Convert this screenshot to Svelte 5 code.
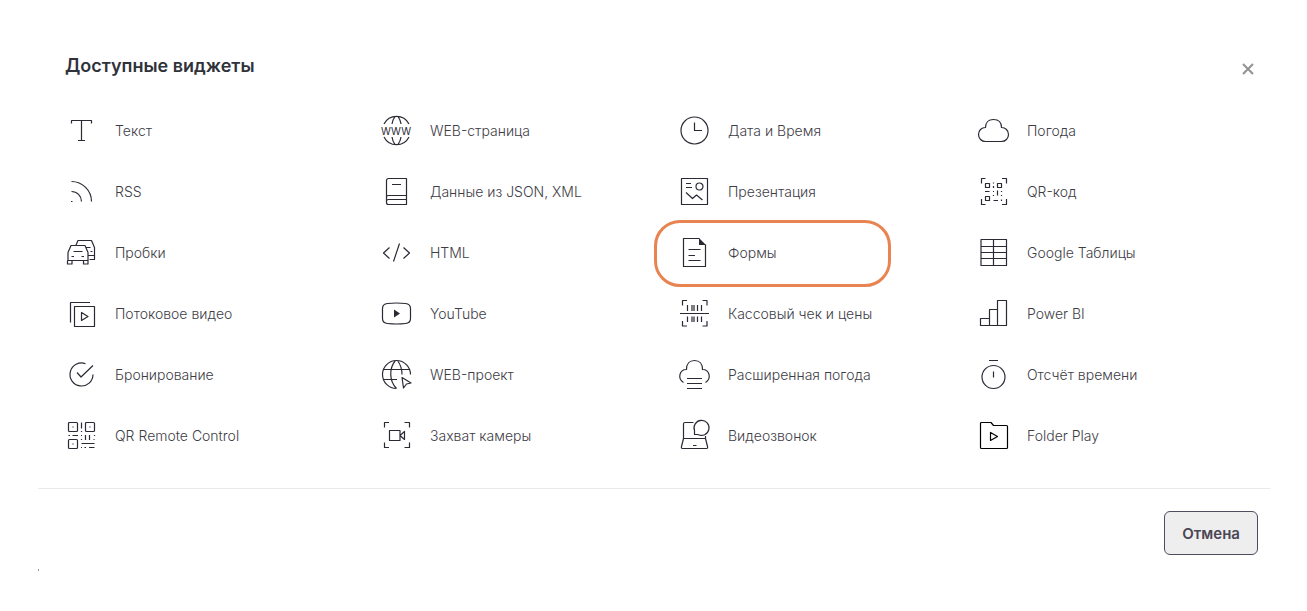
<script>
	let open = $state(true);
	let selected = $state('forms');

	const widgets = [
		{ key: 'text', label: 'Текст' }, { key: 'web', label: 'WEB-страница' },
		{ key: 'clock', label: 'Дата и Время' }, { key: 'weather', label: 'Погода' },
		{ key: 'rss', label: 'RSS' }, { key: 'data', label: 'Данные из JSON, XML' },
		{ key: 'slides', label: 'Презентация' }, { key: 'qr', label: 'QR-код' },
		{ key: 'traffic', label: 'Пробки' }, { key: 'html', label: 'HTML' },
		{ key: 'forms', label: 'Формы' }, { key: 'sheets', label: 'Google Таблицы' },
		{ key: 'stream', label: 'Потоковое видео' }, { key: 'youtube', label: 'YouTube' },
		{ key: 'receipt', label: 'Кассовый чек и цены' }, { key: 'powerbi', label: 'Power BI' },
		{ key: 'booking', label: 'Бронирование' }, { key: 'project', label: 'WEB-проект' },
		{ key: 'forecast', label: 'Расширенная погода' }, { key: 'timer', label: 'Отсчёт времени' },
		{ key: 'remote', label: 'QR Remote Control' }, { key: 'capture', label: 'Захват камеры' },
		{ key: 'call', label: 'Видеозвонок' }, { key: 'folder', label: 'Folder Play' },
	];

	// stroke paths on a 33x32 canvas
	const strokes = {
		text: 'M6.5 8.5v-3h20v3M16.5 5.5v20M13 25.5h7',
		web: 'M4 9a14 14 0 0 1 25 0M4 22a14 14 0 0 0 25 0M15 1.5Q12.5 5 12 9M18 1.5Q20.5 5 21 9M12 22q.5 4 3 7.5M21 22q-.5 4-3 7.5',
		clock: 'M30 15.5a13.5 13.5 0 1 1-27 0a13.5 13.5 0 0 1 27 0zM16.5 7.5v8H24',
		weather: 'M8.5 12.5C8.5 7.5 11.5 4.5 16.5 4.5s8 3 8 8c4 0 7 3 7 7s-3 7-7 7h-16c-4 0-7-3-7-7s3-7 7-7z',
		rss: 'M6.5 5.5a20 20 0 0 1 20 20M6.5 15.5a10 10 0 0 1 10 10M6 25.5h1.5',
		data: 'M26.5 2.5h-18a2 2 0 0 0-2 2v22a2 2 0 0 0 2 2h18zM12 8.5h9M6.5 21.5a2 2 0 0 1 2-2h18M6.5 25.5a2 2 0 0 1 2-2h18',
		slides: 'M3.5 2.5h26v26h-26zM8 7.5h5M8 11.5h6M25 10.5a3.5 3.5 0 1 1-7 0a3.5 3.5 0 0 1 7 0zM8 16.5l6.5 6 4-3.5 6 5',
		qr: 'M4.5 7.5v-5h4M25 2.5h4.5v5M4.5 23v5.5h4M25 28.5h4.5V23M8.5 7.5h4v4h-4zM20.5 7.5h4v4h-4zM8.5 20.5h4v4h-4zM16.5 6.5v1M16.5 10v2M8 15.5h4.5M16 15.5h1M20.5 14.5v5M24.5 15v1M24.5 19v1M16.5 19v1M16.5 24.5h4.5M24.5 23.5v1.5',
		traffic: 'M6 8.5h14l3 7v8h-20v-8zM2.500 23.5v3.5h4.5v-3.5M18.5 23.5v3.5h4.5v-3.5M8.5 14.5h9M6.500 19.5H9M16.5 19.5H19M11 8l2-4.5h13.5l3 7v12h-5M29.500 18.5h-6M21 10.5h4.5M25.500 14.5h2',
		html: 'M9.5 10.5l-6 5.5 6 5.5M23.5 10.5l6 5.5-6 5.5M19.5 6.5l-6 18',
		forms: 'M21.5 1.5h-16v28h22v-22M10.5 12.5h12M10.5 18.5h6.5M10.5 23.5h12',
		sheets: 'M4 2.5h25.5v26H4zM4 9.5h25.5M4 15.5h25.5M4 21.5h25.5M16.5 2.5v26',
		stream: 'M5.5 24.5v-20H25M9.5 8.5h20v20h-20zM16.5 14.5v8l6.5-4z',
		youtube: 'M7.5 5.5q9-1 18 0q5 .5 5 5v10q0 4.5-5 5q-9 1-18 0q-5-.5-5-5v-10q0-4.5 5-5z',
		receipt: 'M4.5 7.5v-5H9M24.5 2.5h4.5v5M4.5 23v5H9M24.5 28h4.5v-5M2 15.5h29M9.5 7v6M14 7v6M16 7v6M19.5 7v6M23.5 7v6M9.5 18.5V24M14 18.5V24M16 18.5V24M19.5 18.5V24M23.5 18.5V24',
		powerbi: 'M3.5 27.5v-7h9v7zM12.5 27.5v-16h8v16zM20.5 27.5v-25h9v25z',
		booking: 'M20.5 4.7A11.5 11.5 0 1 0 28 15.5M12 13.5l4 4.5L28 6.5',
		project: 'M16.5 29.5A14 14 0 1 1 30.5 15.5M4 10.5h25M4 20.5h13M15.5 1.5C9 9 9 22 16.5 29.5M17.5 1.5q4.5 6 4.5 14M22 18.5l9 5.5-4.5 1-3 4z',
		forecast: 'M5.5 23.5C-.5 20 1 10.5 8.500 10.5c0-5.500 3-9 8-9s8 3.500 8 9c7.500 0 9 9.500 3 13M9 19.500h15M9 24.500h15M9 29.500h15',
		timer: 'M28 18a11.5 11.5 0 1 1-23 0a11.5 11.5 0 0 1 23 0zM12 1.5h9M16.5 12.5v6',
		remote: 'M4.5 2.5h7q1 0 1 1v7q0 1-1 1h-7q-1 0-1-1v-7q0-1 1-1zM21.5 2.5h7q1 0 1 1v7q0 1-1 1h-7q-1 0-1-1v-7q0-1 1-1zM4.5 19.5h7q1 0 1 1v7q0 1-1 1h-7q-1 0-1-1v-7q0-1 1-1zM8 6.5v1M25 6.5v1M8 23.5v1M16.5 2.5v6M16.5 11v1M3.5 15.5H5M7.5 15.5H13M16 15.5h1M20.5 15v5M24.5 15v5M29.5 15v1M28.5 19.5h1M16.5 19v1M16.5 23.5h13M16 27.5h1M19.5 27.5H21M24 27.5h5.5',
		capture: 'M4.5 7.5v-5H9M24.5 2.5h5v5M4.5 22.5v5H9M24.5 27.5h5v-5M9.5 10.5h10.5v10h-10.5zM20 15.5l4.5-4v8z',
		call: 'M15.5 2.5H7q-1.5 0-1.5 1.5v14.5h22V16M5.5 18.5l-2 8q-.5 2 1 2h24q1.5 0 1-2l-2-8M15 25.5h3.5M16.5 14.500V10.500A7.500 7.500 0 1 1 20 14.500z',
		folder: 'M4.5 2.5h9.5l2.5 3h13q1 0 1 1v21q0 1-1 1h-25q-1 0-1-1v-24q0-1 1-1zM13.5 12.5v8l7-4z',
	};

	const fills = {
		forms: 'M21 1l7 7h-7z',
		youtube: 'M14 11.5v8l6-4z',
	};
</script>

{#if open}
	<div class="dialog" role="dialog" aria-labelledby="dialog-title">
		<header>
			<h1 id="dialog-title">Доступные виджеты</h1>
			<button class="close" aria-label="Закрыть" onclick={() => open = false}>
				<svg width="12" height="12" viewBox="0 0 12 12"><path d="M1 1l10 10M11 1L1 11" /></svg>
			</button>
		</header>
		<ul class="widgets">
			{#each widgets as w (w.key)}
				<li>
					<button class="widget" class:selected={selected === w.key} onclick={() => selected = w.key}>
						<svg class="icon {w.key}" width="33" height="32" viewBox="0 0 33 32" aria-hidden="true">
							<path d={strokes[w.key]} />
							{#if fills[w.key]}<path class="solid" d={fills[w.key]} />{/if}
							{#if w.key === 'web'}<text x="16" y="20" text-anchor="middle">WWW</text>{/if}
						</svg>
						<span>{w.label}</span>
					</button>
				</li>
			{/each}
		</ul>
		<footer>
			<button class="cancel" onclick={() => open = false}>Отмена</button>
		</footer>
		<div class="tick"></div>
	</div>
{/if}

<style>
	:global(body) { margin: 0; background: #fff; }
	.dialog { padding: 48px 37px 40px 38px; font-family: Inter, "Liberation Sans", sans-serif; color: #3e3d46; }
	header { display: flex; justify-content: space-between; align-items: flex-start; padding: 0 13px 0 27px; }
	h1 { margin: 0; font-size: 18px; line-height: 36px; font-weight: 600; color: #30323a; }
	button { font-family: inherit; cursor: pointer; }
	.close { display: flex; margin-top: 12px; padding: 3px; border: 0; background: none; }
	.close path { fill: none; stroke: #929292; stroke-width: 2; }
	.widgets { display: grid; grid-template-columns: 315fr 298fr 299fr 293fr; row-gap: 29px; margin: 0; padding: 31px 0 36px 27px; list-style: none; }
	.widget { position: relative; display: flex; align-items: center; gap: 17px; padding: 0; border: 0; background: none; color: inherit; font-size: 14px; font-weight: 300; line-height: 20px; white-space: nowrap; }
	.selected::after { content: ""; position: absolute; left: -24px; top: -17px; width: 231px; height: 61px; border: 3px solid #e88452; border-radius: 26px; }
	.icon { flex: none; overflow: visible; }
	.icon path { fill: none; stroke: #2c2935; stroke-width: 1.2; stroke-linejoin: round; }
	.icon .solid { fill: #2c2935; stroke: none; }
	.icon text { font-size: 10px; font-weight: 400; fill: #2c2935; }
	.icon.folder path { stroke: #000; }
	footer { display: flex; justify-content: flex-end; padding: 22px 12px 14px 0; border-top: 1px solid #e9e9e9; }
	.cancel { padding: 2px 17px 0; border: 1px solid #514b5c; border-radius: 6px; background: #eee; color: #4b4554; font-size: 15px; font-weight: 600; line-height: 40px; }
	.tick { width: 1px; height: 2px; background: #999; }
</style>
